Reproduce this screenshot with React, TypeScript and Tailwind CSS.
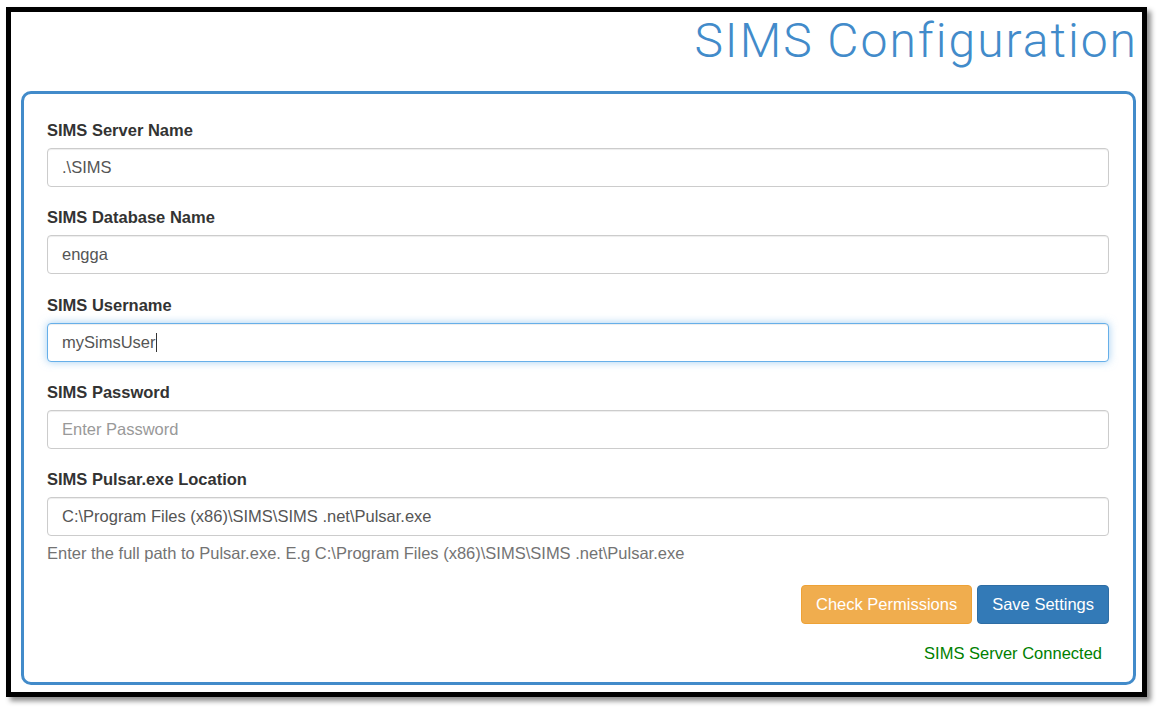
import React from "react";

const font = { fontFamily: '"Liberation Sans", Arial, sans-serif' };

function Field({
  label,
  value,
  placeholder,
  focused,
}: {
  label: string;
  value?: string;
  placeholder?: string;
  focused?: boolean;
}) {
  return (
    <div className="mb-[19.25px]">
      <div className="text-[16.5px] leading-[23px] font-bold text-[#333] mb-[6px]">{label}</div>
      <div
        className={
          "h-[39px] rounded-[4px] border px-[14px] flex items-center text-[16.5px] bg-white " +
          (focused
            ? "border-[#66afe9] shadow-[inset_0_1px_1px_rgba(0,0,0,0.075),0_0_8px_rgba(102,175,233,0.6)]"
            : "border-[#ccc] shadow-[inset_0_1px_1px_rgba(0,0,0,0.075)]")
        }
      >
        {value !== undefined ? (
          <span className="text-[#555] flex items-center">
            {value}
            {focused && <span className="inline-block w-px h-[19px] bg-[#333]" />}
          </span>
        ) : (
          <span className="text-[#999]">{placeholder}</span>
        )}
      </div>
    </div>
  );
}

export default function App() {
  return (
    <div className="w-[1161px] h-[711px] bg-white relative overflow-hidden" style={font}>
      <div className="ml-[6px] mt-[7px] w-[1141px] h-[690px] border-[5px] border-black bg-white shadow-[4px_4px_5px_rgba(0,0,0,0.45)] flex flex-col">
        <div
          className="h-[79px] pr-[4px] pt-[5px] text-right text-[48px] leading-none font-light tracking-[2px] text-[#428bca]"
          style={{ fontFamily: 'Roboto, "Noto Sans", sans-serif' }}
        >
          SIMS Configuration
        </div>
        <div className="ml-[10px] mr-[6px] h-[594px] border-[3px] border-[#428bca] rounded-[10px] pt-[25px] pl-[23px] pr-[24px]">
          <Field label="SIMS Server Name" value=".\SIMS" />
          <Field label="SIMS Database Name" value="engga" />
          <Field label="SIMS Username" value="mySimsUser" focused />
          <Field label="SIMS Password" placeholder="Enter Password" />
          <div>
            <div className="text-[16.5px] leading-[23px] font-bold text-[#333] mb-[6px]">SIMS Pulsar.exe Location</div>
            <div className="h-[39px] rounded-[4px] border border-[#ccc] shadow-[inset_0_1px_1px_rgba(0,0,0,0.075)] px-[14px] flex items-center text-[16.5px] text-[#555]">
              C:\Program Files (x86)\SIMS\SIMS .net\Pulsar.exe
            </div>
            <div className="mt-[6px] text-[16.5px] leading-[23px] text-[#737373]">
              Enter the full path to Pulsar.exe. E.g C:\Program Files (x86)\SIMS\SIMS .net\Pulsar.exe
            </div>
          </div>
          <div className="mt-[20px] flex justify-end gap-[5px]">
            <button className="h-[39px] px-[14px] rounded-[4px] border border-[#eea236] bg-[#f0ad4e] text-white text-[16.5px]">
              Check Permissions
            </button>
            <button className="h-[39px] px-[14px] rounded-[4px] border border-[#2e6da4] bg-[#337ab7] text-white text-[16.5px]">
              Save Settings
            </button>
          </div>
          <div className="mt-[18px] pr-[7px] text-right text-[16.5px] leading-[23px] text-[#008000]">
            SIMS Server Connected
          </div>
        </div>
      </div>
    </div>
  );
}
